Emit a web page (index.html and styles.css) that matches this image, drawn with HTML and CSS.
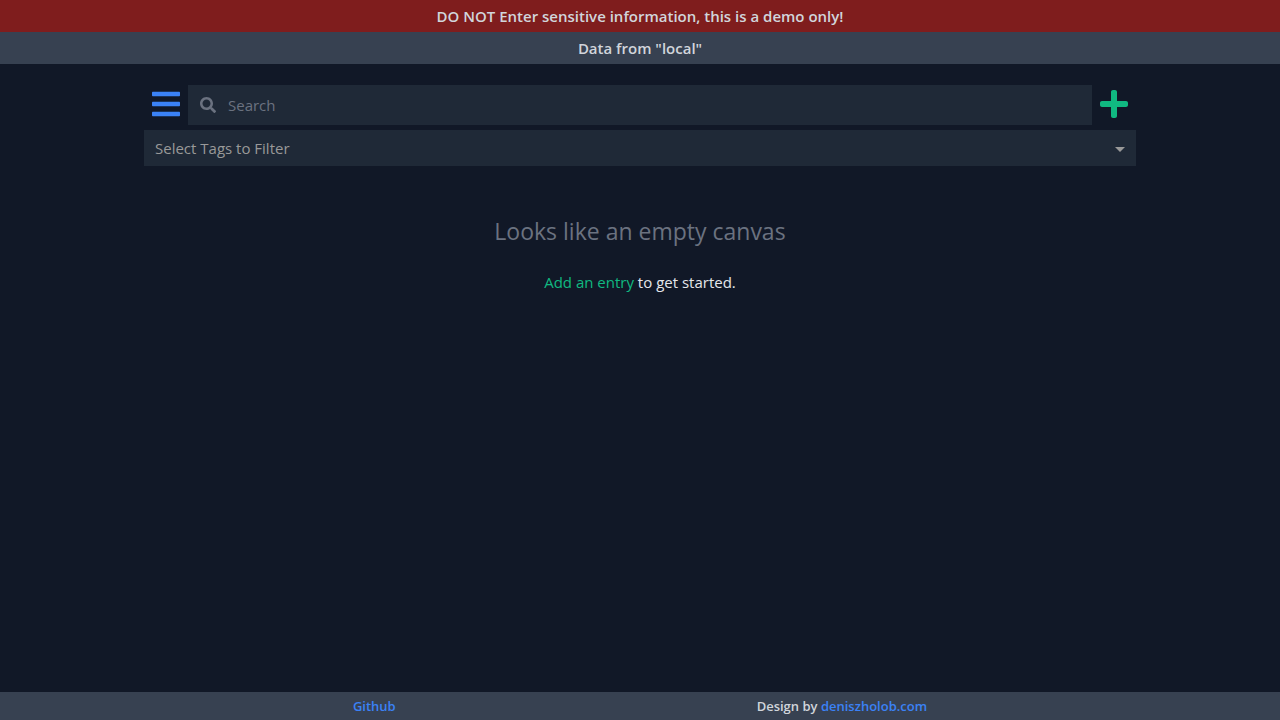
FILE: index.html
```html
<!DOCTYPE html>
<html lang="en">
<head>
  <meta charset="utf-8">
  <meta name="viewport" content="width=device-width, initial-scale=1">
  <title>Entries</title>
  <link rel="stylesheet" href="styles.css">
</head>
<body>
  <div class="banner banner-warning">DO NOT Enter sensitive information, this is a demo only!</div>
  <div class="banner banner-source">Data from "local"</div>

  <main class="content">
    <div class="toolbar">
      <button class="icon-button menu-button" type="button" aria-label="Menu">
        <svg width="28" height="32" viewBox="0 0 448 512" fill="currentColor" aria-hidden="true"><path d="M16 132h416c8.837 0 16-7.163 16-16V76c0-8.837-7.163-16-16-16H16C7.163 60 0 67.163 0 76v40c0 8.837 7.163 16 16 16zm0 160h416c8.837 0 16-7.163 16-16v-40c0-8.837-7.163-16-16-16H16c-8.837 0-16 7.163-16 16v40c0 8.837 7.163 16 16 16zm0 160h416c8.837 0 16-7.163 16-16v-40c0-8.837-7.163-16-16-16H16c-8.837 0-16 7.163-16 16v40c0 8.837 7.163 16 16 16z"/></svg>
      </button>
      <label class="search">
        <svg width="16" height="16" viewBox="0 0 512 512" fill="currentColor" aria-hidden="true"><path d="M505 442.700L405.300 343c-4.500-4.500-10.600-7-17-7H372c27.600-35.300 44-79.700 44-128C416 93.100 322.900 0 208 0S0 93.100 0 208s93.100 208 208 208c48.300 0 92.700-16.400 128-44v16.300c0 6.400 2.500 12.500 7 17l99.700 99.700c9.400 9.400 24.600 9.400 33.900 0l28.300-28.300c9.400-9.400 9.400-24.600.1-34zM208 336c-70.700 0-128-57.200-128-128 0-70.700 57.200-128 128-128 70.700 0 128 57.200 128 128 0 70.700-57.200 128-128 128z"/></svg>
        <input class="search-input" type="text" placeholder="Search" aria-label="Search">
      </label>
      <button class="icon-button add-button" type="button" aria-label="Add entry">
        <svg width="28" height="32" viewBox="0 0 448 512" fill="currentColor" aria-hidden="true"><path d="M416 208H272V64c0-17.670-14.330-32-32-32h-32c-17.670 0-32 14.330-32 32v144H32c-17.670 0-32 14.330-32 32v32c0 17.670 14.330 32 32 32h144v144c0 17.670 14.330 32 32 32h32c17.670 0 32-14.330 32-32V304h144c17.670 0 32-14.330 32-32v-32c0-17.670-14.330-32-32-32z"/></svg>
      </button>
    </div>

    <div class="tag-filter">
      <select class="tag-select" aria-label="Select Tags to Filter">
        <option>Select Tags to Filter</option>
      </select>
      <svg class="caret" width="10" height="5" viewBox="0 0 10 5" fill="currentColor" aria-hidden="true"><path d="M0 0h10L5 5z"/></svg>
    </div>

    <section class="empty">
      <h1 class="empty-title">Looks like an empty canvas</h1>
      <p class="empty-hint"><a class="add-link" href="#add">Add an entry</a> to get started.</p>
    </section>
  </main>

  <footer class="footer">
    <div class="footer-item"><a class="footer-link" href="#github">Github</a></div>
    <div class="footer-item">Design by <a class="footer-link" href="#author">deniszholob.com</a></div>
  </footer>
</body>
</html>
```
FILE: styles.css
```css
*,
*::before,
*::after {
  box-sizing: border-box;
}

body {
  display: flex;
  flex-direction: column;
  min-height: 100vh;
  margin: 0;
  background: #111827;
  color: #e5e7eb;
  font-family: "Segoe UI", "Open Sans", "Noto Sans", sans-serif;
  font-size: 15px;
  line-height: 24px;
}

a {
  text-decoration: none;
}

.banner {
  padding: 4px 8px;
  color: #d1d5db;
  font-weight: 600;
  text-align: center;
}

.banner-warning {
  background: #7f1d1d;
}

.banner-source {
  background: #374151;
}

.content {
  flex: 1;
  width: 100%;
  max-width: 1024px;
  margin: 0 auto;
  padding: 20px 16px;
}

.toolbar {
  display: flex;
  align-items: flex-start;
  margin-bottom: 5px;
}

.icon-button {
  display: flex;
  padding: 4px 8px;
  border: 0;
  background: none;
  cursor: pointer;
}

.menu-button {
  color: #3b82f6;
}

.add-button {
  color: #10b981;
}

.search {
  display: flex;
  flex: 1;
  align-items: center;
  gap: 12px;
  height: 40px;
  margin-top: 1px;
  padding: 0 12px;
  background: #1f2937;
  color: #6b7280;
}

.search-input {
  flex: 1;
  min-width: 0;
  padding: 0;
  border: 0;
  outline: 0;
  background: none;
  color: #d1d5db;
  font: inherit;
}

.search-input::placeholder {
  color: #6b7280;
  opacity: 1;
}

.tag-filter {
  display: grid;
  align-items: center;
  background: #1f2937;
  color: #999999;
}

.tag-select,
.caret {
  grid-area: 1 / 1;
}

.tag-select {
  width: 100%;
  height: 36px;
  padding: 0 32px 0 11px;
  border: 0;
  border-radius: 0;
  appearance: none;
  background: none;
  color: inherit;
  font: inherit;
}

.caret {
  justify-self: end;
  margin-top: 3px;
  margin-right: 11px;
  pointer-events: none;
}

.empty {
  padding-top: 49px;
  text-align: center;
}

.empty-title {
  margin: 0 0 23px;
  color: #6b7280;
  font-size: 23px;
  font-weight: 400;
  line-height: 32px;
}

.empty-hint {
  margin: 0;
}

.add-link {
  color: #10b981;
}

.footer {
  display: flex;
  justify-content: space-evenly;
  padding: 4px 0;
  background: #374151;
  color: #d1d5db;
  font-size: 13px;
  font-weight: 600;
  line-height: 20px;
}

.footer-item {
  padding: 0 8px;
}

.footer-link {
  color: #3b82f6;
}
```
